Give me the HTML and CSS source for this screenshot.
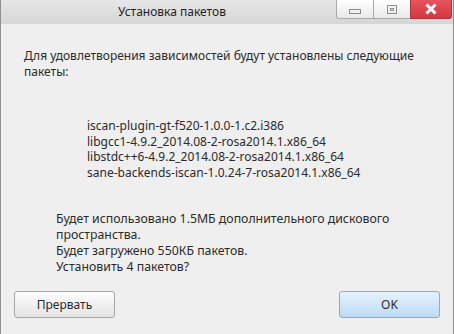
FILE: index.html
```html
<!DOCTYPE html>
<html lang="ru">
<head>
    <meta charset="UTF-8">
    <title>Установка пакетов</title>
    <link rel="stylesheet" href="styles.css">
</head>
<body>
    <div class="window">
        <div class="titlebar">
            <div class="title">Установка пакетов</div>
            <div class="controls">
                <div class="ctl min"><span class="min-glyph"></span></div>
                <div class="ctl max"><span class="max-glyph"></span></div>
                <div class="ctl close">
                    <svg width="14" height="12" viewBox="0 0 14 12">
                        <path d="M2.5 1.5 L11.5 10.5 M11.5 1.5 L2.5 10.5" stroke="#ffffff" stroke-width="3"/>
                    </svg>
                </div>
            </div>
        </div>
        <div class="content">
            <p class="intro">Для удовлетворения зависимостей будут установлены следующие пакеты:</p>
            <ul class="packages">
                <li>iscan-plugin-gt-f520-1.0.0-1.c2.i386</li>
                <li>libgcc1-4.9.2_2014.08-2-rosa2014.1.x86_64</li>
                <li>libstdc++6-4.9.2_2014.08-2-rosa2014.1.x86_64</li>
                <li>sane-backends-iscan-1.0.24-7-rosa2014.1.x86_64</li>
            </ul>
            <div class="summary">
                <div>Будет использовано 1.5МБ дополнительного дискового пространства.</div>
                <div>Будет загружено 550КБ пакетов.</div>
                <div>Установить 4 пакетов?</div>
            </div>
            <div class="actions">
                <button class="btn">Прервать</button>
                <button class="btn default">OK</button>
            </div>
        </div>
    </div>
</body>
</html>
```

FILE: styles.css
```css
body {
    margin: 0;
    width: 454px;
    height: 334px;
    overflow: hidden;
    font-family: "Noto Sans", "Open Sans", sans-serif;
    color: #2b2b2b;
}

.window {
    width: 454px;
    height: 334px;
    box-sizing: border-box;
    border-left: 1px solid #8f8f8f;
    border-right: 1px solid #8f8f8f;
    background-color: #efefef;
    display: flex;
    flex-direction: column;
}

.titlebar {
    height: 24px;
    background: linear-gradient(#e6e6e6, #d6d6d6);
    display: flex;
    position: relative;
}

.title {
    flex: 1;
    text-align: center;
    font-size: 12px;
    line-height: 24px;
    color: #1e1e1e;
    padding-right: 115px;
    padding-left: 5px;
}

.controls {
    position: absolute;
    right: 1px;
    top: 0;
    display: flex;
}

.ctl {
    box-sizing: border-box;
    width: 38px;
    height: 19px;
    border: 1px solid #a9a9a9;
    border-top: none;
    margin-left: -1px;
    background: linear-gradient(#ffffff, #e9e9e9);
    display: flex;
    align-items: center;
    justify-content: center;
}

.ctl.min {
    border-bottom-left-radius: 3px;
}

.ctl.close {
    width: 42px;
    border-color: #b3343c;
    background: linear-gradient(#e8545c, #d23840);
    border-bottom-right-radius: 3px;
}

.min-glyph {
    width: 10px;
    height: 3px;
    border: 1px solid #8c8c8c;
    margin-top: 5px;
}

.max-glyph {
    width: 8px;
    height: 7px;
    border: 1px solid #8c8c8c;
    position: relative;
}

.max-glyph::after {
    content: "";
    position: absolute;
    left: 2px;
    top: 2px;
    width: 2px;
    height: 1px;
    border: 1px solid #8c8c8c;
}

.content {
    flex: 1;
    font-size: 12px;
    line-height: 16px;
    display: flex;
    flex-direction: column;
}

.intro {
    margin: 24px 23px 0 23px;
}

.packages {
    list-style: none;
    margin: 38px 0 0 86px;
    padding: 0;
    line-height: 15.5px;
}

.summary {
    margin: 31px 0 0 55px;
    font-size: 12.3px;
    width: 350px;
}

.actions {
    display: flex;
    justify-content: space-between;
    margin: 16px 13px 0 13px;
}

.btn {
    width: 101px;
    height: 27px;
    border: 1px solid #a6a6a6;
    border-radius: 3px;
    background: linear-gradient(#fdfdfd, #e4e4e4);
    font-family: inherit;
    font-size: 12px;
    color: #2b2b2b;
    padding: 0;
}

.btn.default {
    border-color: #9aa9b8;
    background: linear-gradient(#e6f2fc, #bcdcf5);
}
```
